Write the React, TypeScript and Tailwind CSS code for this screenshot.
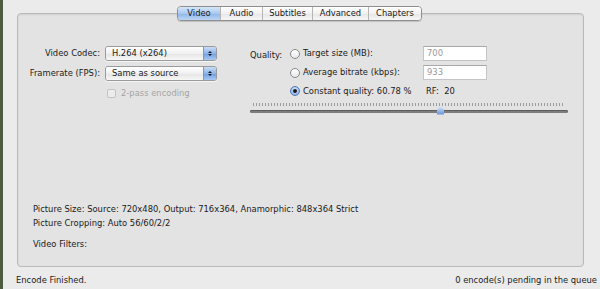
import React from "react";

const font = "font-['DejaVu_Sans',sans-serif]";

function Tab({ label, width, active, last }: { label: string; width: string; active?: boolean; last?: boolean }) {
  return (
    <div
      className={
        "h-full flex items-center justify-center " +
        width +
        (last ? "" : " border-r border-[#b5b5b5]") +
        (active
          ? " bg-[linear-gradient(#d6e6f8,#a9c9ef_50%,#8fb6e8_51%,#bcd6f5)]"
          : " bg-[linear-gradient(#ffffff,#f1f1f1_50%,#e6e6e6_51%,#f6f6f6)]")
      }
    >
      {label}
    </div>
  );
}

function Select({ value }: { value: string }) {
  return (
    <div className="w-[112px] h-[15px] flex rounded-[3px] border border-[#9a9a9a] overflow-hidden shadow-[0_1px_0_#f6f6f6]">
      <div className="flex-1 flex items-center pl-[6px] bg-[linear-gradient(#ffffff,#f0f0f0_50%,#e4e4e4_51%,#f7f7f7)] text-[#1a1a1a]">
        {value}
      </div>
      <div className="w-[13px] flex flex-col items-center justify-center gap-[1px] bg-[linear-gradient(#c9dcf6,#8cb4ea_50%,#6e9fe2_51%,#a9c8f2)] border-l border-[#7c98c2]">
        <div className="w-0 h-0 border-l-[2px] border-r-[2px] border-b-[2px] border-l-transparent border-r-transparent border-b-[#1a1a1a]" />
        <div className="w-0 h-0 border-l-[2px] border-r-[2px] border-t-[2px] border-l-transparent border-r-transparent border-t-[#1a1a1a]" />
      </div>
    </div>
  );
}

function Radio({ checked }: { checked?: boolean }) {
  return (
    <div
      className={
        "w-[10px] h-[10px] rounded-full border flex items-center justify-center " +
        (checked
          ? "border-[#4e75b5] bg-[radial-gradient(circle_at_50%_35%,#d9e8fb,#78a7e6)]"
          : "border-[#8a8a8a] bg-[linear-gradient(#ffffff,#e9e9e9)]")
      }
    >
      {checked && <div className="w-[4px] h-[4px] rounded-full bg-[#1b1b1b]" />}
    </div>
  );
}

function Field({ value }: { value: string }) {
  return (
    <div className="w-[64px] h-[15px] bg-white border border-[#c4c4c4] border-t-[#a8a8a8] flex items-center pl-[3px] text-[#9a9a9a]">
      {value}
    </div>
  );
}

export default function App() {
  return (
    <div className={`w-[600px] h-[289px] flex bg-[#ebebeb] text-[8.4px] text-[#1a1a1a] ${font}`}>
      <div className="w-[3px] bg-[#4d5c3f]" />
      <div className="flex-1 flex flex-col">
        <div className="relative ml-[14px] mt-[13px] w-[567px] h-[254px] rounded-[4px] border border-[#b9b9b9] bg-[#e3e3e3] shadow-[inset_0_1px_2px_rgba(0,0,0,0.08)]">
          {/* tab strip */}
          <div className="absolute -top-[8px] left-[159px] h-[15px] flex rounded-[4px] border border-[#8e8e8e] overflow-hidden shadow-[0_1px_1px_rgba(0,0,0,0.15)]">
            <Tab label="Video" width="w-[43px]" active />
            <Tab label="Audio" width="w-[42px]" />
            <Tab label="Subtitles" width="w-[50px]" />
            <Tab label="Advanced" width="w-[56px]" />
            <Tab label="Chapters" width="w-[52px]" last />
          </div>

          <div className="flex pt-[32px]">
            {/* left column */}
            <div className="w-[210px] flex flex-col gap-[5px]">
              <div className="flex items-center">
                <div className="w-[87px] text-right pr-[5px]">Video Codec:</div>
                <Select value="H.264 (x264)" />
              </div>
              <div className="flex items-center">
                <div className="w-[87px] text-right pr-[5px]">Framerate (FPS):</div>
                <Select value="Same as source" />
              </div>
              <div className="flex items-center gap-[5px] pl-[89px] mt-[1px] text-[#a5a5a5]">
                <div className="w-[9px] h-[9px] rounded-[2px] border border-[#c4c4c4] bg-[#ececec]" />
                <span>2-pass encoding</span>
              </div>
            </div>

            {/* right column */}
            <div className="flex flex-col pl-[22px]">
              <div className="flex">
                <div className="w-[40px] pt-[3px]">Quality:</div>
                <div className="flex flex-col gap-[4px]">
                  <div className="flex items-center">
                    <Radio />
                    <span className="w-[123px] pl-[3px]">Target size (MB):</span>
                    <Field value="700" />
                  </div>
                  <div className="flex items-center">
                    <Radio />
                    <span className="w-[123px] pl-[3px]">Average bitrate (kbps):</span>
                    <Field value="933" />
                  </div>
                  <div className="flex items-center mt-[1px]">
                    <Radio checked />
                    <span className="w-[126px] pl-[3px]">Constant quality: 60.78 %</span>
                    <span>RF:&nbsp; 20</span>
                  </div>
                </div>
              </div>
              {/* slider */}
              <div className="w-[318px] mt-[5px] flex flex-col">
                <div className="mx-[3px] h-[3px] bg-[repeating-linear-gradient(90deg,#9c9c9c_0_1px,transparent_1px_3px)]" />
                <div className="relative mt-[3px] h-[5px] flex items-center">
                  <div className="w-full h-[3px] rounded-full bg-[#7d7d7d] shadow-[inset_0_1px_0_#5c5c5c]" />
                  <div className="absolute left-[187px] -top-[2px] w-[7px] h-[8px] bg-[linear-gradient(#cfe0f8,#5b8fde)] [clip-path:polygon(50%_0,100%_40%,100%_100%,0_100%,0_40%)]" />
                </div>
              </div>
            </div>
          </div>

          {/* picture info */}
          <div className="absolute left-[15px] top-[190px] flex flex-col leading-[11px]">
            <div>Picture Size: Source: 720x480, Output: 716x364, Anamorphic: 848x364 Strict</div>
            <div className="mt-[3px]">Picture Cropping: Auto 56/60/2/2</div>
            <div className="mt-[10px]">Video Filters:</div>
          </div>
        </div>

        {/* status bar */}
        <div className="flex-1 flex items-center justify-between pl-[13px] pr-[3px] pt-[5px]">
          <span>Encode Finished.</span>
          <span>0 encode(s) pending in the queue</span>
        </div>
      </div>
    </div>
  );
}
